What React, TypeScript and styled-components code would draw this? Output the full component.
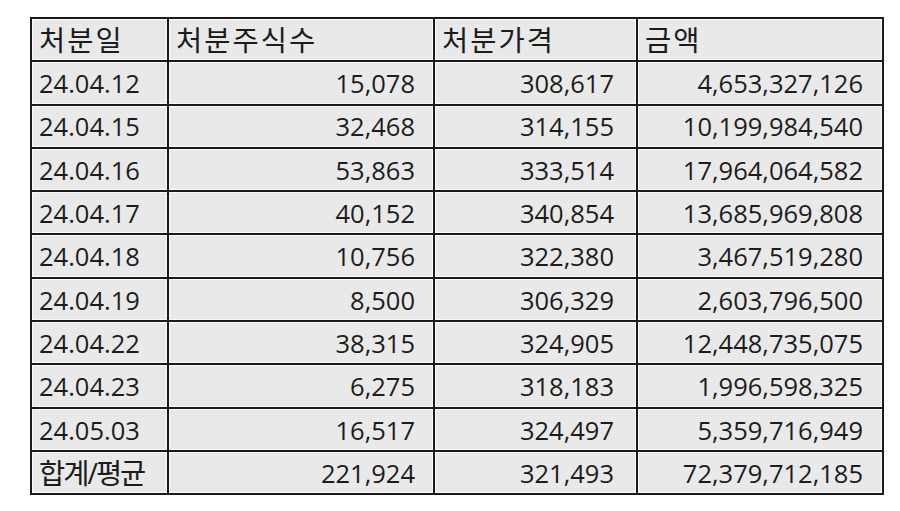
import styled, { createGlobalStyle } from "styled-components"

const GlobalStyle = createGlobalStyle`
  html, body {
    margin: 0;
    padding: 0;
    background: #ffffff;
  }
`

const Page = styled.div`
  width: 900px;
  height: 511px;
  padding: 17px 0 0 30px;
  box-sizing: border-box;
  background: #ffffff;
`

const Table = styled.table`
  border-collapse: collapse;
  table-layout: fixed;
  width: 852px;
  border: 2px solid #1b1b1b;
  font-family: "Open Sans", "Noto Sans CJK KR", sans-serif;
  color: #1c1c1c;
`

const Row = styled.tr`
  height: 43.3px;
`

const Cell = styled.td<{ $kor?: boolean; $tracking?: number }>`
  border: 2px solid #1b1b1b;
  background: #e9e9e9;
  box-shadow: inset 0 0 0 1px #fafafa;
  padding: 2px 6px 0 7px;
  text-align: left;
  font-size: ${(p) => (p.$kor ? "28.5px" : "25.5px")};
  letter-spacing: ${(p) => p.$tracking || 0}px;
  line-height: 1;
  white-space: nowrap;
  vertical-align: middle;
`

const NumCell = styled(Cell)<{ $padRight?: number }>`
  text-align: right;
  padding: 2px ${(p) => p.$padRight ?? 18}px 0 6px;
`

const headers = ["처분일", "처분주식수", "처분가격", "금액"]

const rows = [
  ["24.04.12", "15,078", "308,617", "4,653,327,126"],
  ["24.04.15", "32,468", "314,155", "10,199,984,540"],
  ["24.04.16", "53,863", "333,514", "17,964,064,582"],
  ["24.04.17", "40,152", "340,854", "13,685,969,808"],
  ["24.04.18", "10,756", "322,380", "3,467,519,280"],
  ["24.04.19", "8,500", "306,329", "2,603,796,500"],
  ["24.04.22", "38,315", "324,905", "12,448,735,075"],
  ["24.04.23", "6,275", "318,183", "1,996,598,325"],
  ["24.05.03", "16,517", "324,497", "5,359,716,949"],
]

const total = ["합계/평균", "221,924", "321,493", "72,379,712,185"]

const App = () => {
  return (
    <Page>
      <GlobalStyle />
      <Table>
        <colgroup>
          <col style={{ width: 137 }} />
          <col style={{ width: 266 }} />
          <col style={{ width: 203 }} />
          <col style={{ width: 246 }} />
        </colgroup>
        <tbody>
          <Row>
            {headers.map((h) => (
              <Cell key={h} $kor $tracking={2}>
                {h}
              </Cell>
            ))}
          </Row>
          {[...rows, total].map((r, i) => (
            <Row key={r[0]}>
              {i === rows.length ? (
                <Cell $kor $tracking={-2}>
                  {r[0]}
                </Cell>
              ) : (
                <Cell>{r[0]}</Cell>
              )}
              <NumCell $padRight={18}>{r[1]}</NumCell>
              <NumCell $padRight={22}>{r[2]}</NumCell>
              <NumCell $padRight={19}>{r[3]}</NumCell>
            </Row>
          ))}
        </tbody>
      </Table>
    </Page>
  )
}

export default App
